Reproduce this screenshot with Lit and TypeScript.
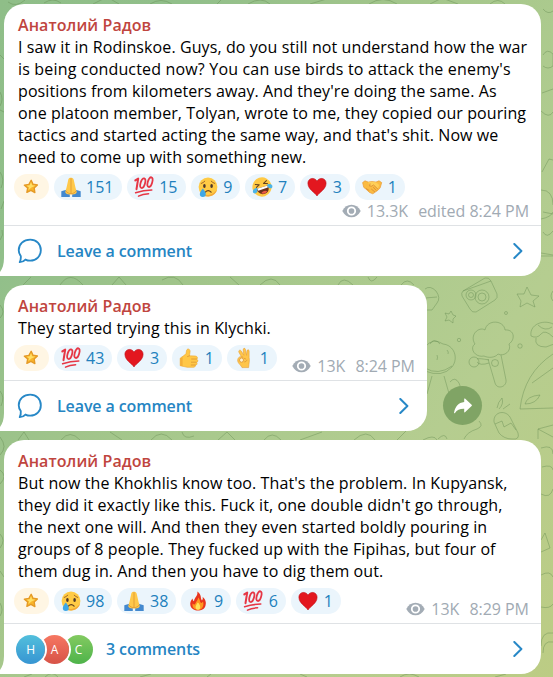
import { LitElement, html, svg, css, nothing } from "lit";
import { customElement, property } from "lit/decorators.js";

type Reaction = { icon: string; count?: number };
type Message = {
  lines: string[];
  reactions: Reaction[];
  views: string;
  time: string;
  narrow?: boolean;
  comments?: number;
  looseLine?: number;
};

const AUTHOR = "Анатолий Радов";

const MESSAGES: Message[] = [
  {
    lines: [
      "I saw it in Rodinskoe. Guys, do you still not understand how the war",
      "is being conducted now? You can use birds to attack the enemy's",
      "positions from kilometers away. And they're doing the same. As",
      "one platoon member, Tolyan, wrote to me, they copied our pouring",
      "tactics and started acting the same way, and that's shit. Now we",
      "need to come up with something new.",
    ],
    looseLine: 1,
    reactions: [
      { icon: "star" },
      { icon: "pray", count: 151 },
      { icon: "hundred", count: 15 },
      { icon: "cry", count: 9 },
      { icon: "rofl", count: 7 },
      { icon: "heart", count: 3 },
      { icon: "shake", count: 1 },
    ],
    views: "13.3K",
    time: "edited 8:24 PM",
  },
  {
    lines: ["They started trying this in Klychki."],
    reactions: [
      { icon: "star" },
      { icon: "hundred", count: 43 },
      { icon: "heart", count: 3 },
      { icon: "thumb", count: 1 },
      { icon: "ok", count: 1 },
    ],
    views: "13K",
    time: "8:24 PM",
    narrow: true,
  },
  {
    lines: [
      "But now the Khokhlis know too. That's the problem. In Kupyansk,",
      "they did it exactly like this. Fuck it, one double didn't go through,",
      "the next one will. And then they even started boldly pouring in",
      "groups of 8 people. They fucked up with the Fipihas, but four of",
      "them dug in. And then you have to dig them out.",
    ],
    reactions: [
      { icon: "star" },
      { icon: "cry", count: 98 },
      { icon: "pray", count: 38 },
      { icon: "fire", count: 9 },
      { icon: "hundred", count: 6 },
      { icon: "heart", count: 1 },
    ],
    views: "13K",
    time: "8:29 PM",
    comments: 3,
  },
];

const ICONS: Record<string, unknown> = {
  star: svg`
    <path d="M10.5 2.6 12.6 7.2 17.6 7.9 13.9 11.4 14.7 16.6 10.2 14.2 5.6 16.4 6.5 11.3 2.7 8.3 7.9 7.3Z" fill="#f9b52b" stroke="#e59a26" stroke-width="1.6" stroke-linejoin="round"/>
    <path d="M10.3 4.6 11.6 8.2 15.3 8.9 11.2 10.6 7.3 13.6 8 10.6 5 8.9 8.9 8.2Z" fill="#ffdf65"/>`,
  pray: svg`
    <path d="M0.3 14.2 6.2 12.6 8.8 16.6V20H0.3Z" fill="#4389cf"/>
    <path d="M19.7 14.2 13.8 12.6 11.2 16.6V20H19.7Z" fill="#4389cf"/>
    <path d="M9.8.8C8 .4 7.2 1.8 7 4L5.6 10.2 4.2 15.2C5.2 17 7.4 18 9.9 17.2 12.6 18 14.8 17 15.8 15.2L14.4 10.2 13 4C12.8 1.8 11.8.4 9.8.8Z" fill="#ffc84a"/>
    <path d="M10 1.2V16.8M5 14.2C6.4 15.8 8.2 16.6 10 16.8 11.8 16.6 13.6 15.8 15 14.2" fill="none" stroke="#dc9531" stroke-width=".8"/>`,
  hundred: svg`
    <g fill="none" stroke="#e63645" stroke-linecap="round" stroke-linejoin="round">
      <path d="M1.3 3.4 4.2 1.5 2.5 12.2" stroke-width="2"/>
      <ellipse cx="8.8" cy="6.2" rx="2.2" ry="5" transform="rotate(16 8.8 6.2)" stroke-width="1.8"/>
      <ellipse cx="16" cy="5.1" rx="2.2" ry="5" transform="rotate(16 16 5.1)" stroke-width="1.8"/>
      <path d="M1.6 15.7C7 14 12 13.2 17.8 13.1" stroke-width="1.5"/>
      <path d="M4.5 19.2C7.4 17.6 10.6 16.9 14.6 16.8" stroke-width="1.5"/>
    </g>`,
  cry: svg`
    <circle cx="10" cy="10" r="9.4" fill="#ffcb45"/>
    <path d="M2 15A9.4 9.4 0 0 0 19.2 12 11 11 0 0 1 2 15Z" fill="#f3a93a"/>
    <path d="M3.2 6.5Q5.2 5.8 6.8 4.2M13.2 4.2Q14.8 5.8 16.8 6.5" fill="none" stroke="#a66a27" stroke-width="1" stroke-linecap="round"/>
    <ellipse cx="6.4" cy="9" rx="1.3" ry="1.9" fill="#4d382a"/>
    <ellipse cx="13.6" cy="9" rx="1.3" ry="1.9" fill="#4d382a"/>
    <path d="M7.3 15.2Q10.2 11.9 13.1 15.2" fill="none" stroke="#67431e" stroke-width="1.2" stroke-linecap="round"/>
    <path d="M4.8 11.4C6.2 13.2 7.8 15 7.8 17A3 3 0 0 1 1.8 17C1.8 15 3.6 13.2 4.8 11.4Z" fill="#3da7e6"/>`,
  rofl: svg`
    <g transform="rotate(-18 10 10)">
      <circle cx="10" cy="10" r="9.6" fill="#ffc944"/>
      <path d="M4.2 10.2H16.2C16.6 14.6 14.2 17.4 10.6 17.4 7 17.4 4.2 14.6 4.2 10.2Z" fill="#6b321c"/>
      <path d="M4.8 10.2H15.8L15.3 12.3H5.3Z" fill="#fff"/>
      <path d="M7.2 15.7Q10.5 12.8 13.8 15.6 10.5 18.3 7.2 15.7Z" fill="#ed5a45"/>
      <path d="M4.4 5.6 8 7 4.6 8.6M16.2 5.4 12.6 7 16.2 8.4" fill="none" stroke="#63411f" stroke-width="1.1" stroke-linejoin="round" stroke-linecap="round"/>
      <path d="M5 9.4C2.8 8.6.2 9.8-.2 12 0 14.8 3.6 14.4 4.4 12.4Z" fill="#4ab4e8"/>
      <path d="M15.3 9.4C17.5 8.6 20 9.8 20.2 12 20 14.8 16.8 14.4 16 12.4Z" fill="#4ab4e8"/>
    </g>`,
  heart: svg`
    <path d="M10 19C8.2 15.6.9 12.4.9 6.2.9 1.1 7.5-.5 10 4.2 12.5-.5 19.1 1.1 19.1 6.2 19.1 12.4 11.8 15.6 10 19Z" fill="#e3171f" stroke="#bd1119" stroke-width=".6"/>`,
  shake: svg`
    <path d="M.6 5.6 3 3.8 6.2 5.1 10 4.6 14 5.1 17 3.8 19.7 5.6 18.2 10.8 15.9 13.3 10.8 16.8 7.5 15.4 3.8 12 1.8 10.4Z" fill="#fbbb42" stroke="#e89b38" stroke-width=".7" stroke-linejoin="round"/>
    <path d="M6 5.3 10 4.7 14 5.2 17.2 8 15.7 12 12.4 8.6 8.2 9.5Z" fill="#ffcf58"/>
    <path d="M8 6.8 7.6 9.1Q9.8 9.8 11.5 8L15.8 12M9.5 12.2 12.7 14.8M11.4 10.5 14.2 13.3M4.2 11.6 7 13.4" fill="none" stroke="#d78932" stroke-width=".8" stroke-linecap="round"/>`,
  thumb: svg`
    <path d="M1.2 10.2C3.2 8.4 5.8 7.5 7 5.6L7.6 2.3C8.4.1 11.2.9 11.1 3.4L10.5 7.8 16.4 8C18.7 8.2 18.9 10.4 17.8 11.2 19.5 12 19 14 17.6 14.4 18.7 15.7 17.8 17.1 16.4 17.2 16.7 18.7 15.4 19.3 14 19.3H8.2L1.2 17.7Z" fill="#ffc746" stroke="#eda736" stroke-width=".6"/>
    <path d="M12.6 11H17.4M12.4 14.2H17.1M12.2 17H16.2M8.6 8.5 10.5 7.8" fill="none" stroke="#db9533" stroke-width=".8" stroke-linecap="round"/>
    <path d="M1.2 10.2 3.6 8.9V18.2L1.2 17.7Z" fill="#f4af38"/>`,
  ok: svg`
    <path d="M7.3 8.6 4.9 4.2C4.2 2.4 6.2 1.4 7.3 3L9.9 7.3 9.2 1.9C9.1-.1 11.2-.2 11.5 1.7L12.6 7.4 13 3C13.3 1.2 15.2 1.4 15.1 3.3L15.1 9.5C15.8 12.6 14.9 15.6 14.6 19.6H8C7.3 17.4 4.1 15.6 3.7 13.1 3.3 9.5 6.1 7.5 9.1 9.3Z" fill="#ffc54a" stroke="#e69d35" stroke-width=".6" stroke-linejoin="round"/>
    <ellipse cx="7.5" cy="12.1" rx="2" ry="2.1" fill="#fff1cf" stroke="#d99335" stroke-width=".8"/>
    <path d="M9.8 10.2 12.2 11.2M10.2 14Q12.4 14 13.2 11.8" fill="none" stroke="#d99335" stroke-width=".7"/>`,
  fire: svg`
    <path d="M9.3.6C14.2 4 12 7.1 14 9.4 14.9 8.4 14.9 7.1 14.6 5.8 18 9 18.4 12 17.4 15 16.2 18.4 13.2 19.6 10 19.6 6.5 19.6 3.3 18 2.4 14.6 1.8 11.8 2.8 9.2 4.6 7.5 4.7 9 5.1 9.9 6 10.2 6.3 6.5 10.3 5 9.3.6Z" fill="#e9351d"/>
    <path d="M10.2 6.5C12.7 9.3 11.4 11.3 13.6 12.1L15 10.4C16.4 14.7 14.2 18.9 10 18.9 5.9 18.9 4 16.4 4.6 12.6 5.7 14 7 13.5 7.5 12.2 8 10.3 10.1 9.2 10.2 6.5Z" fill="#ff9820"/>
    <path d="M9.8 11.5C12.5 13.4 13.4 18.6 10 18.7 6.7 18.6 6.9 15.1 9.8 11.5Z" fill="#ffe25c"/>`,
};

const EYE = html`<svg class="eye" viewBox="0 0 20 14">
  <path d="M.3 7C2.6 2.6 6 .3 10 .3S17.4 2.6 19.7 7C17.4 11.4 14 13.7 10 13.7S2.6 11.4.3 7Z" fill="#a3acb5"/>
  <circle cx="10" cy="7" r="3.9" fill="none" stroke="#fff" stroke-width="1.9"/>
</svg>`;

const doodles = svg`
  <g transform="translate(425 200)">
    <g transform="translate(0 67)">
      <path d="M38 24 60 11Q64 10 66 14L72 27Q73 31 70 33L51 45Q47 46 45 42L37 29Q36 26 38 24ZM38 24 66 14"/>
      <circle cx="46" cy="28" r="5"/><circle cx="46" cy="28" r="2.5"/><circle cx="57" cy="30" r="7"/><circle cx="57" cy="30" r="4"/>
    </g>
    <path d="M102 87 106 95 114 96 108 101 110 107 102 103 95 107 96 101 92 94 99 94Z"/>
    <path d="M26 111 28 115 31 116 28 119 28 123 24 120 20 121 22 117 20 113 24 114Z"/>
    <circle cx="34" cy="140" r="1.7"/><circle cx="81" cy="113" r="1.5"/><circle cx="95" cy="146" r="2.2"/>
    <path d="M59 156C50 158 44 148 50 144 44 135 54 126 60 130 62 119 79 120 80 130 89 129 91 139 84 144 87 151 79 157 73 154 70 158 63 158 59 156Z"/>
    <path d="M63 159 70 183C72 190 82 187 81 180L76 155M64 160Q54 158 52 159M64 163Q55 166 52 162"/>
    <circle cx="49" cy="162" r="5"/><circle cx="70" cy="163" r="3.5"/>
    <path d="M106 136C104 122 124 118 132 127M106 136Q112 139 116 134T128 137M111 138Q109 147 121 147L129 144M113 125Q120 132 127 127"/>
    <path d="M0 147Q8 137 18 144C29 145 34 158 27 167Q17 178 0 171M0 168Q13 176 27 166M5 144Q9 137 15 144M12 160Q13 157 12 155M23 154Q24 152 22 150M19 176 25 197M7 176 2 194M25 182Q30 176 34 183T28 190"/>
    <path d="M128 154Q99 173 95 209L128 208M100 204Q102 196 115 195 111 204 100 204M107 183 128 168"/>
    <path d="M72 208Q73 202 77 198 79 204 74 209M78 209 85 204"/>
    <path d="M69 222C68 211 82 209 86 219L93 233Q95 240 87 239 79 239 74 233ZM70 224 77 221 79 227 86 223 91 230"/>
    <path d="M113 239V229L128 225M113 229 128 237M54 221Q59 226 52 229 42 232 39 239M13 239Q20 232 22 239"/>
    <path d="M0 89Q5 85 11 91 16 98 12 103L7 110 0 110M0 98 12 97"/>
    <path d="M128 91Q124 96 128 101M118 32Q122 39 128 31M116 53 128 55M118 12 128 14"/>
  </g>
  <path d="M8 2Q16 8 25 0M44 3Q53-3 61 3M93 4 107-3 119 4M150 4Q161-3 172 4M217 4 223-2M248 4Q261-4 270 4M310 4 330-2M369 4Q383-5 397 4M430 4 442-2 458 4M490 4Q498-3 505 4"/>
  <path d="M0 55 4 59M0 92Q4 99 0 106M0 110 4 112M0 172Q5 179 1 188M1 209 4 201M0 240Q4 235 2 230M0 305Q6 312 0 318M0 391Q5 397 1 406M0 437Q8 447 0 455M0 470Q8 476 0 484M0 534Q6 540 0 548M0 571 4 577M0 603Q4 610 0 616"/>
  <path d="M23 285 31 277M60 285Q70 270 83 285M112 285 119 277 126 285M162 280Q175 272 183 285M230 277 239 285M260 285Q272 273 280 285M338 285Q343 275 353 285M368 277Q371 285 377 277M401 285Q407 277 414 285"/>
  <path d="M18 440 24 432 29 440M61 440Q70 429 80 440M110 432 122 440M151 440Q161 428 172 440M182 432Q184 440 194 436M218 440 227 432 235 440M264 440Q272 430 281 440M300 440 322 432M354 440Q367 428 375 440M397 440 406 431M423 440Q434 434 437 440"/>
  <path d="M543 9Q548 15 553 11M543 55Q547 48 553 54V66Q548 70 543 66M542 93 553 89M541 111Q549 119 553 112M542 172 549 159 553 160M541 190Q553 190 553 205M541 219Q551 217 553 212M541 256H553M541 448Q553 444 553 454M542 467Q552 464 553 470M541 494Q550 499 553 489M541 540 545 533 550 548 541 552M541 575Q550 570 553 577M541 607Q550 609 553 604M541 646Q541 631 553 633M543 653Q543 640 553 642"/>
  <path d="M24 677 32 674M45 677Q52 670 58 677M140 677 151 674M207 677 211 674M300 674 307 677M400 677Q409 671 419 677M495 677 506 674"/>`;

const BUBBLE = html`<svg class="bubble-icon" viewBox="0 0 24 24">
  <path d="M12.2 1.5C18 1.5 22 5.8 22 11.2S18 20.9 12.2 20.9C10.6 20.9 9 20.5 7.8 19.9 6.4 21.4 4.7 22.2 2.5 22.3 3.4 20.6 3.7 18.8 3.5 16.6 2.3 15 1.6 13.2 1.6 11.2 1.6 5.8 6 1.5 12.2 1.5Z" fill="none" stroke="#2788c7" stroke-width="1.7" stroke-linejoin="round"/>
</svg>`;

@customElement("chat-message")
class ChatMessage extends LitElement {
  @property({ attribute: false }) message!: Message;

  static styles = css`
    :host { display: block; position: relative; width: 537px; border-radius: 20px 20px 20px 0; background: #fff; font: 16px/22px "Open Sans", sans-serif; color: #000; }
    :host([narrow]) { width: 423px; }
    .tail { position: absolute; left: -7px; bottom: 0; width: 7px; height: 18px; fill: #fff; }
    .content { padding: 10px 12px 0 14px; }
    .author { color: #c0453e; font-weight: 600; letter-spacing: .08px; }
    .line { white-space: nowrap; letter-spacing: .095px; }
    .line.loose { letter-spacing: .17px; }
    .info { display: flex; flex-wrap: wrap; justify-content: space-between; margin-top: 6px; min-height: 35px; }
    .reactions { display: flex; gap: 5px; margin-left: -4px; height: 26px; }
    .pill { box-sizing: border-box; display: flex; align-items: center; gap: 5.5px; height: 26px; padding: 0 8.2px 0 7px; border-radius: 13px; background: #ebf5fc; color: #2180bd; font-weight: 500; }
    .pill.star { background: #fff6e4; padding: 0 9px 0 8px; }
    .pill svg { width: 20px; height: 20px; overflow: visible; }
    .pill.star svg { width: 17.5px; height: 17.5px; }
    .meta { display: flex; align-items: center; height: 22px; margin: 0 0 3px auto; color: #a1aab3; align-self: flex-end; letter-spacing: -.03px; }
    .eye { width: 19px; height: 14px; margin-right: 6px; }
    .time { margin-left: 10px; }
    .footer { display: flex; align-items: center; box-sizing: border-box; height: 51px; border-top: 1px solid #dfe2e5; padding: 0 18px 0 13px; color: #2585c3; font-weight: 600; letter-spacing: -.1px; }
    .bubble-icon { width: 26px; height: 26px; margin-right: 14px; }
    .arrow { width: 10px; height: 16px; margin-left: auto; }
    .avatars { display: flex; margin: 0 13px 0 -1px; font-weight: 500; }
    .avatar { width: 29px; height: 29px; margin-right: -5px; border-radius: 50%; box-shadow: 0 0 0 2px #fff; color: #fff; font-size: 12px; line-height: 29px; text-align: center; position: relative; }
    .h { z-index: 3; background: linear-gradient(#52bfdc, #3795d2); }
    .a { z-index: 2; background: linear-gradient(#f67762, #d75347); }
    .c { z-index: 1; margin-right: 0; background: linear-gradient(#83ca61, #4eb34a); }
  `;

  render() {
    const m = this.message;
    return html`
      <svg class="tail" viewBox="0 0 7 18"><path d="M7 0C7 8 4.5 13.5.5 16.5Q-.5 18 1 18H7Z"/></svg>
      <div class="content">
        <div class="author">${AUTHOR}</div>
        ${m.lines.map((l, i) => html`<div class="line ${i === m.looseLine ? "loose" : ""}">${l}</div>`)}
        <div class="info">
          <div class="reactions">
            ${m.reactions.map((r) => html`
              <div class="pill ${r.icon}">
                <svg viewBox="0 0 20 20">${ICONS[r.icon]}</svg>
                ${r.count ? html`<span>${r.count}</span>` : nothing}
              </div>`)}
          </div>
          <div class="meta">${EYE}<span>${m.views}</span><span class="time">${m.time}</span></div>
        </div>
      </div>
      <div class="footer">
        ${m.comments
          ? html`<div class="avatars"><div class="avatar h">H</div><div class="avatar a">A</div><div class="avatar c">C</div></div><span>${m.comments} comments</span>`
          : html`${BUBBLE}<span>Leave a comment</span>`}
        <svg class="arrow" viewBox="0 0 10 16"><path d="M1.3 1 8.4 8 1.3 15" fill="none" stroke="#2788c7" stroke-width="2" stroke-linecap="round" stroke-linejoin="round"/></svg>
      </div>`;
  }
}

@customElement("app-root")
class AppRoot extends LitElement {
  static styles = css`
    :host { display: block; position: relative; height: 677px; overflow: hidden; background: linear-gradient(125deg, #8fbe88 0%, #91bf8a 18%, #a0c48a 36%, #a9c98d 50%, #b5cd90 72%, #bccc84 100%); }
    .pattern { position: absolute; inset: 0; width: 553px; height: 677px; fill: none; stroke: #638b51; stroke-opacity: .42; stroke-width: 1; stroke-linejoin: round; }
    .feed { position: relative; display: flex; flex-direction: column; gap: 9px; padding: 4px 0 0 4px; }
    .row { display: flex; align-items: flex-end; gap: 16px; }
    .share { display: flex; align-items: center; justify-content: center; width: 39px; height: 39px; margin-bottom: 6px; border-radius: 50%; background: #80a465; }
    .share svg { width: 18px; height: 16px; fill: #fff; }
  `;

  render() {
    return html`
      <svg class="pattern" viewBox="0 0 553 677">${doodles}</svg>
      <div class="feed">
        ${MESSAGES.map((m) => html`
          <div class="row">
            <chat-message .message=${m} ?narrow=${m.narrow}></chat-message>
            ${m.narrow
              ? html`<div class="share"><svg viewBox="0 0 18 16"><path d="M10.2.8Q10.4.1 11 .6L17.6 6.8Q18.2 7.5 17.6 8.1L11 14.3Q10.4 14.8 10.2 14.1V10.8C5.8 10.7 3.2 11.8.8 15.2.1 15.6 0 15 .1 14.5 1.2 8.5 4.4 4.6 10.2 4Z"/></svg></div>`
              : nothing}
          </div>`)}
      </div>`;
  }
}
